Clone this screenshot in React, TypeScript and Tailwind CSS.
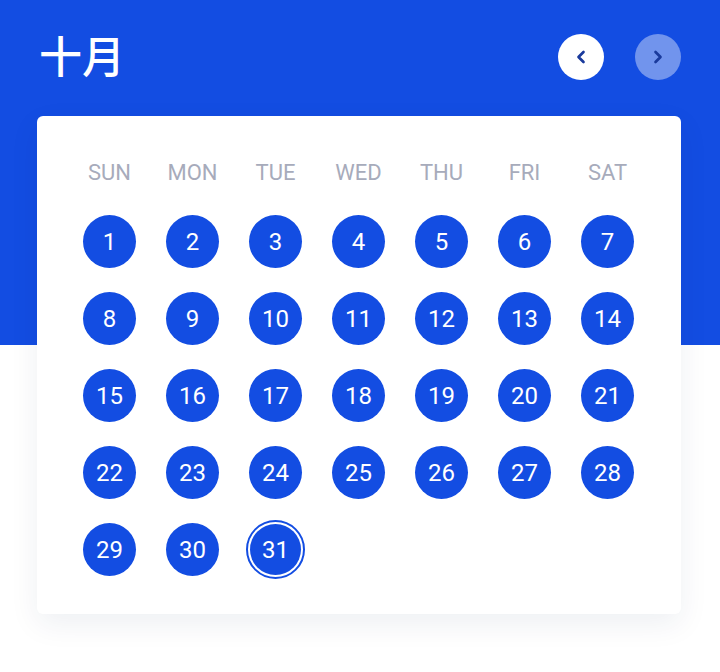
import React from 'react';
import { ChevronLeft, ChevronRight } from 'lucide-react';

const weekdays = ['SUN', 'MON', 'TUE', 'WED', 'THU', 'FRI', 'SAT'];
const days = Array.from({ length: 31 }, (_, i) => i + 1);
const today = 31;

export default function App() {
  return (
    <div className="w-[720px] h-[672px] overflow-hidden bg-[linear-gradient(to_bottom,#134de2_345px,#ffffff_345px)] font-['Roboto','Noto_Sans',sans-serif]">
      <div className="pl-[37px] pr-[39px] pt-[30px]">
        {/* header */}
        <div className="flex items-center justify-between h-[54px]">
          <h1 className="ml-[2px] -mt-[5px] text-white text-[43px] leading-none font-medium font-['Noto_Sans_CJK_SC','Noto_Sans',sans-serif]">
            十月
          </h1>
          <div className="flex items-center gap-[31px]">
            <button className="w-[46px] h-[46px] rounded-full bg-white flex items-center justify-center text-[#1a3a9c]">
              <ChevronLeft size={20} strokeWidth={3.2} />
            </button>
            <button className="w-[46px] h-[46px] rounded-full bg-white/40 flex items-center justify-center text-[#1a3a9c]">
              <ChevronRight size={20} strokeWidth={3.2} />
            </button>
          </div>
        </div>

        {/* calendar card */}
        <div className="mt-[32px] bg-white rounded-[6px] shadow-[0_10px_30px_rgba(20,40,90,0.07)] pl-[31px] pr-[32px] pt-[43px] pb-[38px]">
          <div className="grid grid-cols-7">
            {weekdays.map((d) => (
              <div key={d} className="text-center text-[22px] leading-[28px] text-[#a7abbb]">
                {d}
              </div>
            ))}
          </div>
          <div className="grid grid-cols-7 gap-y-[24px] mt-[28px]">
            {days.map((d) => (
              <div key={d} className="flex items-center justify-center h-[53px]">
                {d === today ? (
                  <div className="w-[59px] h-[59px] rounded-full border-2 border-[#134de2] p-[2px] shrink-0">
                    <div className="w-full h-full rounded-full bg-[#134de2] flex items-center justify-center text-white text-[24px]">
                      {d}
                    </div>
                  </div>
                ) : (
                  <div className="w-[53px] h-[53px] rounded-full bg-[#134de2] flex items-center justify-center text-white text-[24px]">
                    {d}
                  </div>
                )}
              </div>
            ))}
          </div>
        </div>
      </div>
    </div>
  );
}
